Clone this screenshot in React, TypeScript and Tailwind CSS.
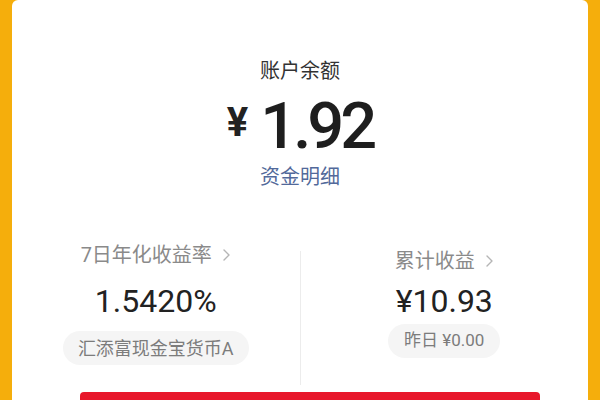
import React from 'react';

const font = { fontFamily: '"Roboto", "Noto Sans CJK SC", sans-serif' };

const Chevron = () => (
  <svg width="9" height="14" viewBox="0 0 9 14" className="ml-[10px] text-[#b5b5b5]" fill="none">
    <path d="M2 2l5 5-5 5" stroke="currentColor" strokeWidth="1.4" strokeLinecap="round" strokeLinejoin="round" />
  </svg>
);

export default function App() {
  return (
    <div className="w-[600px] h-[400px] overflow-hidden bg-[#f5ae0c] px-3" style={font}>
      <div className="h-full bg-white rounded-t-md flex flex-col items-center pt-[57px]">
        <div className="text-[20px] leading-[28px] text-[#333]">账户余额</div>

        <div className="flex items-start h-[66px] mt-[9px]">
          <span className="text-[40px] leading-none font-bold text-[#222] mt-[9px] mr-[12px]">¥</span>
          <span className="text-[65px] leading-none font-medium text-[#1e1e1e] tracking-[-4px]">1.92</span>
        </div>

        <div className="text-[20px] leading-[28px] text-[#52699a] mt-[4px]">资金明细</div>

        <div className="w-full grid grid-cols-[1fr_1px_1fr] mt-[50px]">
          <div className="flex flex-col items-center pb-[20px]">
            <div className="flex items-center text-[20px] leading-[28px] text-[#8a8a8a]">
              7日年化收益率
              <Chevron />
            </div>
            <div className="text-[32px] leading-[40px] text-[#222] mt-[12px]">1.5420%</div>
            <div className="mt-[10px] h-[34px] px-[15px] rounded-full bg-[#f5f5f5] flex items-center text-[18px] text-[#7c7c7c]">
              汇添富现金宝货币A
            </div>
          </div>

          <div className="bg-[#ececec] mt-[10px] h-[134px]" />

          <div className="flex flex-col items-center pt-[6px]">
            <div className="flex items-center text-[20px] leading-[28px] text-[#8a8a8a]">
              累计收益
              <Chevron />
            </div>
            <div className="text-[32px] leading-[40px] text-[#222] mt-[6px]">¥10.93</div>
            <div className="mt-[3px] h-[34px] px-[16px] rounded-full bg-[#f5f5f5] flex items-center text-[17px] text-[#7c7c7c]">
              昨日 ¥0.00
            </div>
          </div>
        </div>

        <div className="self-start ml-[68px] w-[460px] h-[40px] mt-[7px] bg-[#e8172b] rounded-t-sm shrink-0" />
      </div>
    </div>
  );
}
